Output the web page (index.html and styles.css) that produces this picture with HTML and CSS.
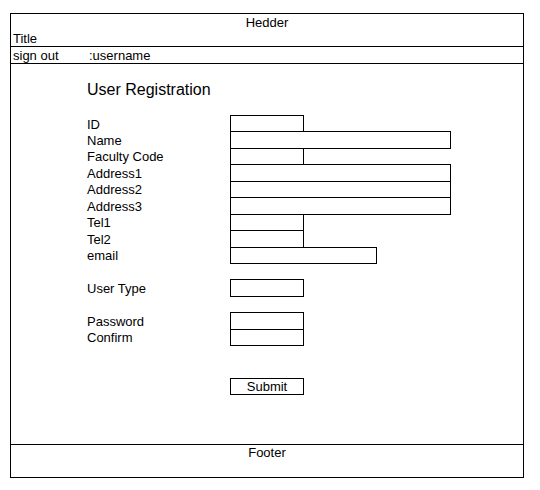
FILE: index.html
```html
<!DOCTYPE html>
<html lang="en">
<head>
    <meta charset="UTF-8">
    <meta name="viewport" content="width=device-width, initial-scale=1.0">
    <title>User Registration</title>
    <link rel="stylesheet" href="styles.css">
</head>
<body>
    <div class="page">
        <div class="header">
            <div class="header-caption">Hedder</div>
            <div class="header-title">Title</div>
        </div>
        <div class="nav">
            <span class="nav-signout">sign out</span>
            <span class="nav-user">:username</span>
        </div>
        <div class="main">
            <h1 class="heading">User Registration</h1>
            <form id="registerForm" onsubmit="return false;">
                <div class="field-group">
                    <label for="userId">ID</label>
                    <input type="text" id="userId" class="box box-short">
                    <label for="userName">Name</label>
                    <input type="text" id="userName" class="box box-long">
                    <label for="facultyCode">Faculty Code</label>
                    <input type="text" id="facultyCode" class="box box-short">
                    <label for="address1">Address1</label>
                    <input type="text" id="address1" class="box box-long">
                    <label for="address2">Address2</label>
                    <input type="text" id="address2" class="box box-long">
                    <label for="address3">Address3</label>
                    <input type="text" id="address3" class="box box-long">
                    <label for="tel1">Tel1</label>
                    <input type="text" id="tel1" class="box box-short">
                    <label for="tel2">Tel2</label>
                    <input type="text" id="tel2" class="box box-short">
                    <label for="email">email</label>
                    <input type="text" id="email" class="box box-mid">
                </div>
                <div class="field-group">
                    <label for="userType">User Type</label>
                    <input type="text" id="userType" class="box box-short">
                </div>
                <div class="field-group">
                    <label for="password">Password</label>
                    <input type="password" id="password" class="box box-short">
                    <label for="confirm">Confirm</label>
                    <input type="password" id="confirm" class="box box-short">
                </div>
                <div class="field-group actions">
                    <span></span>
                    <button type="submit" class="box box-short submit">Submit</button>
                </div>
            </form>
        </div>
        <div class="footer">Footer</div>
    </div>
</body>
</html>
```

FILE: styles.css
```css
/* Wireframe style: black lines on white */
body {
    margin: 0;
    background-color: #fff;
    color: #000;
    font-family: "Liberation Sans", Arial, sans-serif;
    font-size: 13px;
}
.page {
    width: 514px;
    height: 465px;
    margin: 13px 0 0 10px;
    border: 1px solid #000;
    box-sizing: border-box;
    display: flex;
    flex-direction: column;
}
.header {
    height: 33px;
    padding-top: 1px;
    box-sizing: border-box;
    border-bottom: 1px solid #000;
    line-height: 16px;
}
.header-caption {
    text-align: center;
}
.header-title {
    padding-left: 2px;
}
.nav {
    display: flex;
    height: 17px;
    padding-top: 1px;
    box-sizing: border-box;
    line-height: 15px;
    border-bottom: 1px solid #000;
}
.nav-signout {
    width: 76px;
    padding-left: 2px;
}
.main {
    flex: 1;
    padding-left: 76px;
}
.heading {
    margin: 16px 0 16px;
    font-size: 16px;
    font-weight: normal;
    line-height: 19px;
}
.field-group {
    display: grid;
    grid-template-columns: 143px auto;
    grid-auto-rows: 16.45px;
    align-items: start;
    margin-bottom: 16.45px;
}
.field-group label {
    padding-top: 1.5px;
    line-height: 16.45px;
}
.box {
    display: block;
    height: 17.45px;
    padding: 0;
    margin: 0;
    border: 1px solid #000;
    border-radius: 0;
    box-sizing: border-box;
    background-color: #fff;
    font-family: inherit;
    font-size: 13px;
    color: #000;
    outline: none;
}
.box-short {
    width: 74px;
}
.box-mid {
    width: 147px;
}
.box-long {
    width: 221px;
}
.actions {
    margin-top: 32.9px;
}
.submit {
    line-height: 15px;
    text-align: center;
    cursor: pointer;
}
.footer {
    height: 32px;
    border-top: 1px solid #000;
    line-height: 16px;
    text-align: center;
}
```
